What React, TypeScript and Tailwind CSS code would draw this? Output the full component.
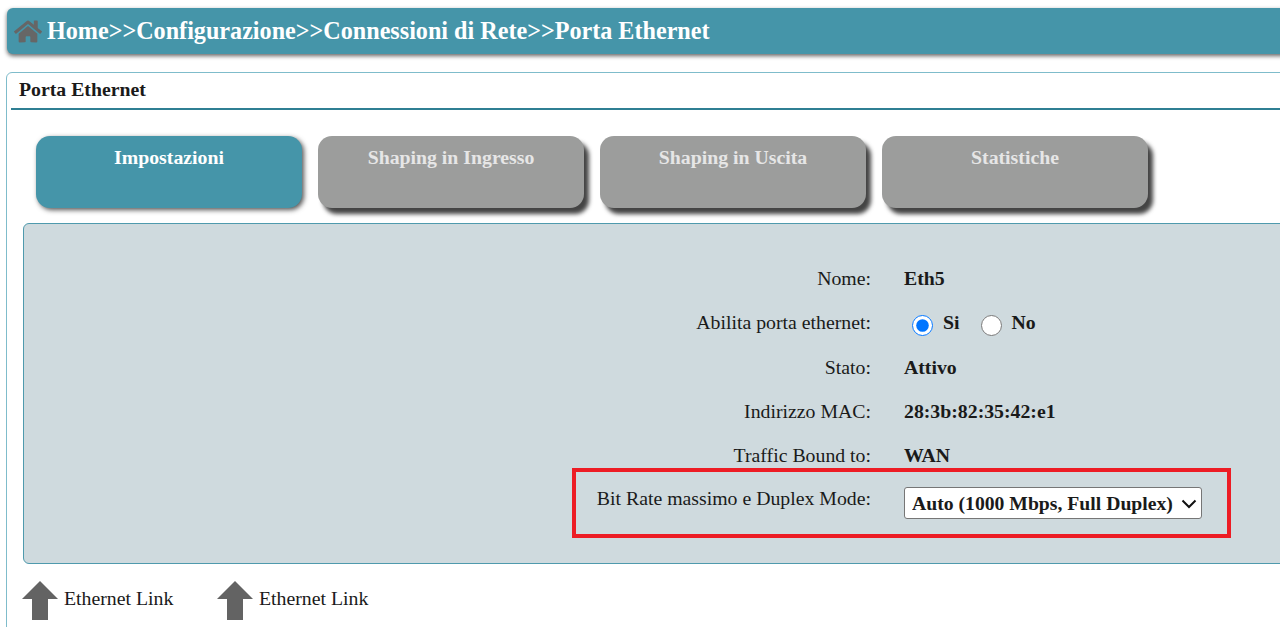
import { FaHome } from "react-icons/fa";

const tabs = [
  { label: "Impostazioni", active: true },
  { label: "Shaping in Ingresso" },
  { label: "Shaping in Uscita" },
  { label: "Statistiche" },
];

function Row({ label, children, className }: { label: string; children: React.ReactNode; className: string }) {
  return (
    <div className={`grid grid-cols-[847px_1fr] gap-x-[33px] ${className}`}>
      <div className="text-right text-[19.8px] leading-[22px] text-[#1a1a1a]">{label}</div>
      <div className="text-[19.8px] leading-[22px] font-bold text-[#1a1a1a]">{children}</div>
    </div>
  );
}

function UpArrow() {
  return (
    <svg width="36" height="40" viewBox="0 0 36 40" className="shrink-0">
      <path d="M18 0 L36 18 L26 18 L26 39 L10 39 L10 18 L0 18 Z" fill="#636363" />
    </svg>
  );
}

export default function App() {
  return (
    <div className="h-[627px] w-[1280px] overflow-hidden bg-white font-['Liberation_Serif',serif]">
      <div className="pt-2 pl-[7px]">
        <div className="-mr-6 flex h-[46px] items-center rounded-[6px] bg-[#4595a9] pl-[7px] shadow-[0_2px_4px_#666]">
          <FaHome className="h-[25px] w-[28px] shrink-0 text-[#666666]" />
          <span className="ml-[5px] text-[24.15px] font-bold whitespace-nowrap text-white">
            Home&gt;&gt;Configurazione&gt;&gt;Connessioni di Rete&gt;&gt;Porta Ethernet
          </span>
        </div>
      </div>

      <div className="mt-[18px] ml-1.5 -mr-6 h-[600px] rounded-t-[6px] border border-[#7fbccb] pl-1">
        <div className="h-[37px] border-b-2 border-[#2f7f93] pt-[5px] pl-2 text-[19.8px] leading-[22px] font-bold text-[#1a1a1a]">
          Porta Ethernet
        </div>

        <div className="mt-[26px] flex gap-4 pl-[25px]">
          {tabs.map((t) => (
            <div
              key={t.label}
              className={`h-[72px] w-[266px] rounded-[14px] pt-[10px] text-center text-[19.8px] leading-[22px] font-bold ${
                t.active
                  ? "bg-[#4595a9] text-white shadow-[2px_2px_5px_#555]"
                  : "bg-[#9c9d9c] text-[#e6e6e6] shadow-[5px_6px_4px_#444]"
              }`}
            >
              {t.label}
            </div>
          ))}
        </div>

        <div className="relative mt-[15px] ml-3 h-[341px] rounded-[6px] border border-[#4f9aad] bg-[#cfdade] pt-[43px]">
          <Row label="Nome:" className="mb-[22px]">Eth5</Row>
          <Row label="Abilita porta ethernet:" className="mb-[23px]">
            <div className="flex h-[22px] items-start pl-2">
              <input type="radio" name="porta" defaultChecked className="m-0 mt-[4px] h-[21px] w-[21px]" />
              <span className="ml-[10px]">Si</span>
              <input type="radio" name="porta" className="m-0 mt-[4px] ml-[21px] h-[21px] w-[21px]" />
              <span className="ml-[10px]">No</span>
            </div>
          </Row>
          <Row label="Stato:" className="mb-[22px]">Attivo</Row>
          <Row label="Indirizzo MAC:" className="mb-[22px]">28:3b:82:35:42:e1</Row>
          <Row label="Traffic Bound to:" className="mb-[21px]">WAN</Row>
          <Row label="Bit Rate massimo e Duplex Mode:" className="">
            <div className="relative w-[298px]">
              <select className="block h-[32px] w-full appearance-none rounded-[3px] border border-[#767676] bg-white pl-[7px] text-[19.7px] font-bold text-[#1a1a1a]">
                <option>Auto (1000 Mbps, Full Duplex)</option>
              </select>
              <svg width="16" height="10" viewBox="0 0 16 10" className="pointer-events-none absolute top-[12px] right-[5px]">
                <path d="M1.5 1.5 L8 8 L14.5 1.5" fill="none" stroke="#111" strokeWidth="2" />
              </svg>
            </div>
          </Row>
          <div className="absolute top-[244px] left-[548px] h-[70px] w-[659px] border-4 border-[#ed1c24]" />
        </div>

        <div className="mt-[17px] flex text-[19.8px] leading-[22px] text-[#1a1a1a]">
          <div className="ml-[11px] flex w-[195px] items-start">
            <UpArrow />
            <span className="mt-[6px] ml-1.5">Ethernet Link</span>
          </div>
          <div className="flex items-start">
            <UpArrow />
            <span className="mt-[6px] ml-1.5">Ethernet Link</span>
          </div>
        </div>
      </div>
    </div>
  );
}
